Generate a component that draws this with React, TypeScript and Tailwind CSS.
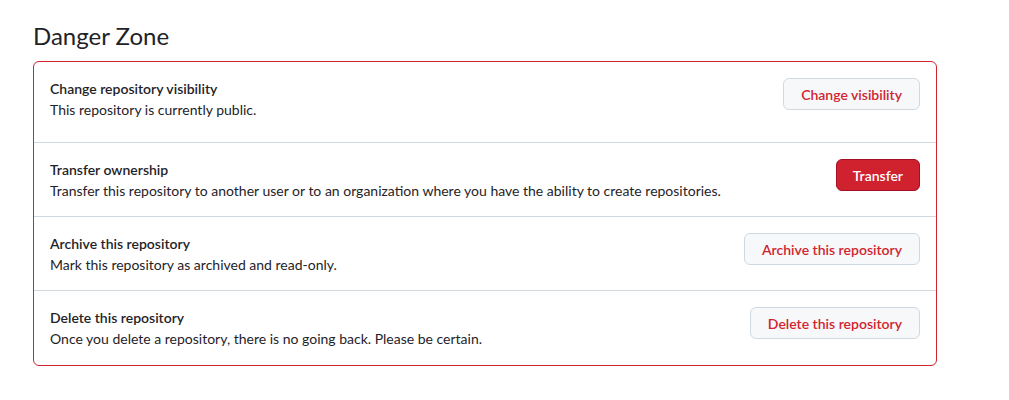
const rows = [
  {
    title: "Change repository visibility",
    desc: "This repository is currently public.",
    action: "Change visibility",
    primary: false,
  },
  {
    title: "Transfer ownership",
    desc: "Transfer this repository to another user or to an organization where you have the ability to create repositories.",
    action: "Transfer",
    primary: true,
  },
  {
    title: "Archive this repository",
    desc: "Mark this repository as archived and read-only.",
    action: "Archive this repository",
    primary: false,
  },
  {
    title: "Delete this repository",
    desc: "Once you delete a repository, there is no going back. Please be certain.",
    action: "Delete this repository",
    primary: false,
  },
];

export default function App() {
  return (
    <div className="min-h-[400px] bg-white pl-[33px] pt-[18px] font-['Lato',sans-serif] text-[#1f2328]">
      <h2 className="mb-[7px] text-[24px] leading-[36px] font-normal">Danger Zone</h2>
      <div className="w-[904px] rounded-md border border-[#d1242f]">
        {rows.map((row, i) => (
          <div
            key={row.title}
            className={
              i === 0
                ? "flex items-start justify-between px-4 pb-[22px] pt-4"
                : i === rows.length - 1
                  ? "flex items-start justify-between border-t border-[#d1d9e0] px-4 pb-4 pt-4"
                  : "flex items-start justify-between border-t border-[#d1d9e0] px-4 pb-[15px] pt-4"
            }
          >
            <div className="text-[14px] leading-[21px]">
              <div className="font-semibold">{row.title}</div>
              <div>{row.desc}</div>
            </div>
            {row.primary ? (
              <button
                type="button"
                className="h-8 rounded-md border border-[#a40e26] bg-[#cf222e] px-4 text-[14px] font-semibold text-white"
              >
                {row.action}
              </button>
            ) : (
              <button
                type="button"
                className="h-8 rounded-md border border-[#d1d9e0] bg-[#f6f8fa] px-[17px] text-[14px] font-semibold text-[#d1242f]"
              >
                {row.action}
              </button>
            )}
          </div>
        ))}
      </div>
    </div>
  );
}
